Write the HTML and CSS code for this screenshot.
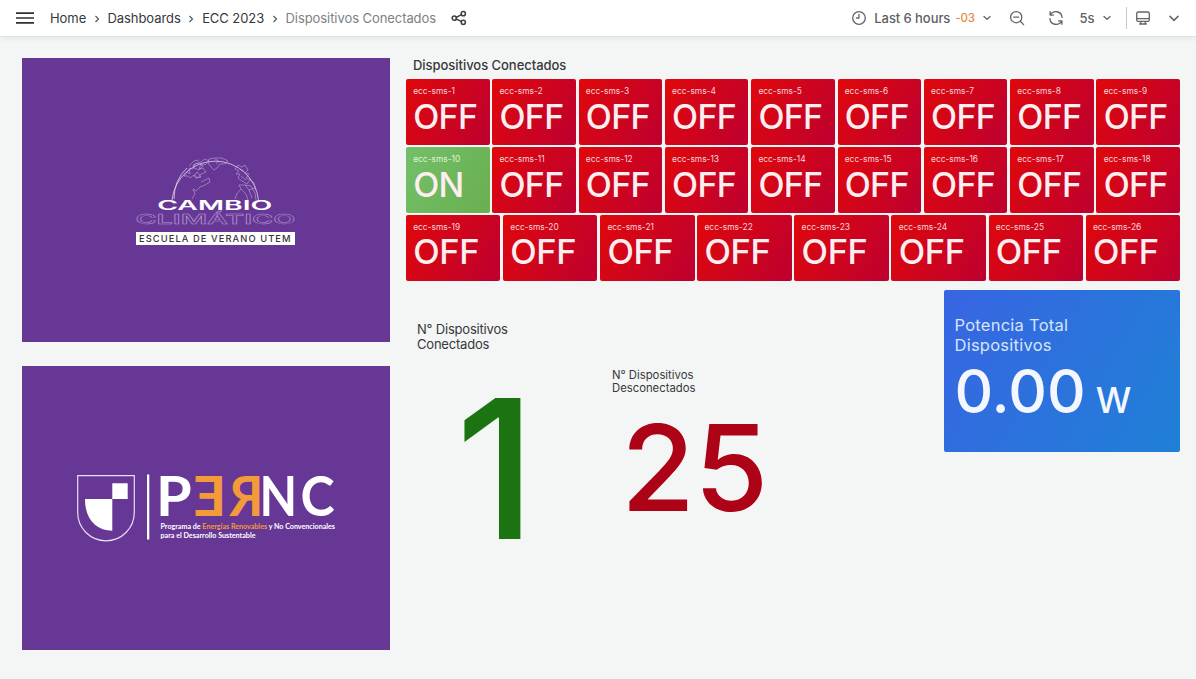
FILE: index.html
```html
<!DOCTYPE html>
<html lang="es">
<head>
<meta charset="utf-8">
<title>Dispositivos Conectados</title>
<link rel="stylesheet" href="styles.css">
</head>
<body>
<header class="topbar">
  <svg class="menu" viewBox="0 0 18 12" width="18" height="12"><path d="M0 1.1H18M0 6H18M0 10.9H18"/></svg>
  <nav class="crumbs">
    <a>Home</a>
    <svg class="sep" viewBox="0 0 6 8"><path d="M1.5 1L4.5 4L1.5 7"/></svg>
    <a>Dashboards</a>
    <svg class="sep" viewBox="0 0 6 8"><path d="M1.5 1L4.5 4L1.5 7"/></svg>
    <a>ECC 2023</a>
    <svg class="sep" viewBox="0 0 6 8"><path d="M1.5 1L4.5 4L1.5 7"/></svg>
    <span class="current">Dispositivos Conectados</span>
  </nav>
  <svg class="icon share" viewBox="0 0 16 16" width="16" height="16"><circle cx="3.3" cy="8.2" r="2.1"/><circle cx="12.3" cy="3.7" r="2.1"/><circle cx="12.3" cy="12.3" r="2.1"/><path d="M5.3 7.3L10.3 4.7M5.3 9.1L10.3 11.4"/></svg>
  <div class="tools">
    <svg class="icon" viewBox="0 0 16 16" width="16" height="16"><circle cx="8" cy="8" r="6.3"/><path d="M8 4.5V8H5.5"/></svg>
    <span class="range">Last 6 hours</span>
    <span class="zone">-03</span>
    <svg class="icon caret" viewBox="0 0 8 6" width="8" height="6"><path d="M1 1.5L4 4.3L7 1.5"/></svg>
    <svg class="icon zoom" viewBox="0 0 16 16" width="16" height="16"><circle cx="7.2" cy="7.2" r="5.6"/><path d="M11.3 11.3L14.6 14.6M4.7 7.2H9.7"/></svg>
    <svg class="icon sync" viewBox="0 0 16 16" width="16" height="16"><path d="M2.1 1.7V5.1H5.4M2.4 5A6.2 6.2 0 0 1 14.1 7.4M13.9 14.3V10.9H10.6M13.6 11A6.2 6.2 0 0 1 1.9 8.6"/></svg>
    <span class="every">5s</span>
    <svg class="icon caret" viewBox="0 0 8 6" width="8" height="6"><path d="M1 1.5L4 4.3L7 1.5"/></svg>
    <i class="rule"></i>
    <svg class="icon" viewBox="0 0 16 16" width="16" height="16"><rect x="1.7" y="2" width="12.6" height="9.4" rx="1.4"/><path d="M1.7 8.7H14.3M5.7 11.6V13.9H10.3V11.6M4.6 14H11.4"/></svg>
    <svg class="icon more" viewBox="0 0 10 7" width="10" height="7"><path d="M1 1.4L5 5.4L9 1.4"/></svg>
  </div>
</header>

<main class="board">
  <section class="logos">
    <svg class="logo" viewBox="22 58 368 284">
      <g class="globe">
        <path class="rim" d="M172 200A43.500 43.500 0 0 1 258.500 200M174 199Q174 180 187 168"/>
        <path d="M184 176L187 172L190 174L189 168L193 169L195 164L201 162L205 159L209 161L205 165L201 164L199 169L203 168L206 172L201 174L198 178L194 175L190 178L188 176ZM189 166L194 161L199 160M193 165L198 163L203 166L199 170L194 168Z"/>
        <path d="M201 182L205 180L209 178L210 182L205 185L200 187L196 191L193 189L195 194L192 199M194 176L197 172L201 177L196 178Z"/>
        <path d="M209 159L215 158L222 158L228 161L225 164L220 164L217 168L214 170L211 167L208 163ZM215 159L219 161L216 164"/>
        <path d="M235 169L238 165L242 167L245 165L248 170L245 173L249 174L246 178L250 180L247 184L242 181L238 178L240 174L236 174L239 171ZM240 169L244 171M241 176L246 180"/>
        <path d="M235 199Q236 193 241 189L239 185L245 185L251 186L255 193L256 200M241 189L246 194L248 200M245 185L249 190L252 198M249 178L254 183L256 190M249 190L255 188"/>
      </g>
      <text class="cambio" transform="translate(157.200 210) scale(1.75 1)" font-size="12.800" textLength="65.800" lengthAdjust="spacingAndGlyphs">CAMBIO</text>
      <text class="clima" transform="translate(135.500 224) scale(1.75 1)" font-size="13.500" textLength="91.200" lengthAdjust="spacingAndGlyphs">CLIMÁTICO</text>
      <rect x="136" y="232" width="159" height="13" fill="#fff"/>
      <text class="escuela" x="139" y="242" font-size="9.300" textLength="151.500">ESCUELA DE VERANO UTEM</text>
    </svg>
    <svg class="logo" viewBox="22 366 368 284">
      <path class="shield" d="M77.700 475.700H134.300V512.500A28.300 28.300 0 0 1 77.700 512.500Z"/>
      <path fill="#fff" d="M112.300 483.300H127.700V499H112.300V530.700C96 530.700 85 519 85 499H112.300Z"/>
      <rect x="147" y="474.500" width="2.300" height="65" fill="#fff"/>
      <g class="pernc">
        <text transform="translate(156 516) scale(1.040 1)">P</text>
        <text class="hot" transform="translate(226.500 516) scale(-1.040 1)">E</text>
        <text class="hot" transform="translate(263.500 516) scale(-.960 1)">R</text>
        <text transform="translate(259.500 516) scale(.880 1)">N</text>
        <text transform="translate(300.500 516) scale(.930 1)">C</text>
      </g>
      <text class="sub" x="160.500" y="529" textLength="174.500" lengthAdjust="spacingAndGlyphs">Programa de <tspan class="hot">Energías Renovables</tspan> y No Convencionales</text>
      <text class="sub" x="160.500" y="538" textLength="95" lengthAdjust="spacingAndGlyphs">para el Desarrollo Sustentable</text>
    </svg>
  </section>

  <section class="panels">
    <h2 class="title">Dispositivos Conectados</h2>
    <div class="rows">
      <div class="row">
        <div class="tile"><small>ecc-sms-1</small><b>OFF</b></div>
        <div class="tile"><small>ecc-sms-2</small><b>OFF</b></div>
        <div class="tile"><small>ecc-sms-3</small><b>OFF</b></div>
        <div class="tile"><small>ecc-sms-4</small><b>OFF</b></div>
        <div class="tile"><small>ecc-sms-5</small><b>OFF</b></div>
        <div class="tile"><small>ecc-sms-6</small><b>OFF</b></div>
        <div class="tile"><small>ecc-sms-7</small><b>OFF</b></div>
        <div class="tile"><small>ecc-sms-8</small><b>OFF</b></div>
        <div class="tile"><small>ecc-sms-9</small><b>OFF</b></div>
      </div>
      <div class="row">
        <div class="tile on"><small>ecc-sms-10</small><b>ON</b></div>
        <div class="tile"><small>ecc-sms-11</small><b>OFF</b></div>
        <div class="tile"><small>ecc-sms-12</small><b>OFF</b></div>
        <div class="tile"><small>ecc-sms-13</small><b>OFF</b></div>
        <div class="tile"><small>ecc-sms-14</small><b>OFF</b></div>
        <div class="tile"><small>ecc-sms-15</small><b>OFF</b></div>
        <div class="tile"><small>ecc-sms-16</small><b>OFF</b></div>
        <div class="tile"><small>ecc-sms-17</small><b>OFF</b></div>
        <div class="tile"><small>ecc-sms-18</small><b>OFF</b></div>
      </div>
      <div class="row wide">
        <div class="tile"><small>ecc-sms-19</small><b>OFF</b></div>
        <div class="tile"><small>ecc-sms-20</small><b>OFF</b></div>
        <div class="tile"><small>ecc-sms-21</small><b>OFF</b></div>
        <div class="tile"><small>ecc-sms-22</small><b>OFF</b></div>
        <div class="tile"><small>ecc-sms-23</small><b>OFF</b></div>
        <div class="tile"><small>ecc-sms-24</small><b>OFF</b></div>
        <div class="tile"><small>ecc-sms-25</small><b>OFF</b></div>
        <div class="tile"><small>ecc-sms-26</small><b>OFF</b></div>
      </div>
    </div>
    <div class="stats">
      <div class="stat up">
        <p>N° Dispositivos<br>Conectados</p>
        <strong>1</strong>
      </div>
      <div class="stat down">
        <p>N° Dispositivos<br>Desconectados</p>
        <strong>25</strong>
      </div>
      <div class="power">
        <p>Potencia Total<br>Dispositivos</p>
        <div class="value">0.00<span>W</span></div>
      </div>
    </div>
  </section>
</main>
</body>
</html>
```

FILE: styles.css
```css
* { box-sizing: border-box; }
body {
  margin: 0;
  height: 679px;
  overflow: hidden;
  background: #f4f5f5;
  color: #36383c;
  font-family: Inter, "Liberation Sans", sans-serif;
}
p, h2 { margin: 0; font-weight: 400; }

.topbar {
  display: flex;
  align-items: center;
  height: 37px;
  padding: 0 16px;
  background: #fff;
  border-bottom: 1px solid #dfe0e1;
  box-shadow: 0 2px 6px rgba(24, 26, 27, .06);
  font-size: 13px;
}
.menu { stroke: #2f3136; stroke-width: 1.7; }
.crumbs { display: flex; align-items: center; margin-left: 16px; white-space: nowrap; letter-spacing: -.07px; }
.sep { width: 6px; height: 8px; margin: 2px 7.700px 0; fill: none; stroke: #55575b; stroke-width: 1.2; }
.current { color: #7d7f83; }
.icon { fill: none; stroke: #63656a; stroke-width: 1.3; stroke-linecap: round; stroke-linejoin: round; flex: none; }
.share { margin-left: 14.500px; stroke: #3c3e42; stroke-width: 1.5; }
.tools { display: flex; align-items: center; margin-left: auto; color: #5e6065; font-weight: 500; white-space: nowrap; }
.range { margin-left: 7.500px; letter-spacing: -.07px; }
.zone { margin-left: 5px; color: #e58b45; font-size: 11.5px; letter-spacing: -.1px; }
.caret { margin-left: 8px; }
.zone + .caret { margin-left: 8px; }
.zoom { margin-left: 18.500px; }
.sync { margin-left: 23px; }
.every { margin-left: 15px; }
.rule { width: 1px; height: 22px; margin: 0 8px 0 15px; background: #c9cacc; }
.more { margin: 0 1.500px 0 18px; stroke-width: 1.5; }

.board { display: grid; grid-template-columns: 368px 774px; column-gap: 16px; padding: 21px 16px 0 22px; }
.logos { display: grid; grid-template-rows: 284px 284px; row-gap: 24px; }
.logo { display: block; width: 368px; height: 284px; background: #673796; }
.globe { fill: none; stroke: #cdbbdf; stroke-width: .5; }
.rim { stroke: #e0d5eb; stroke-width: .8; }
.cambio { fill: #fff; font-weight: 600; }
.clima { fill: none; stroke: #b497d0; stroke-width: .4; font-weight: 600; }
.escuela { fill: #37343c; font-weight: 500; }
.shield { fill: none; stroke: #e8def1; stroke-width: 1.2; }
.pernc { fill: #fff; font-family: Lato, sans-serif; font-weight: 700; font-size: 55.5px; }
.sub { fill: #fff; font-family: Lato, sans-serif; font-weight: 700; font-size: 7.5px; }
.hot { fill: #f39a3b; }

.title { height: 21px; padding-left: 7px; font-size: 13px; font-weight: 500; line-height: 14px; letter-spacing: -.04px; }
.rows { display: grid; grid-template-rows: repeat(3, 65.6px); row-gap: 2.600px; }
.row { display: grid; grid-template-columns: repeat(9, 1fr); column-gap: 2.800px; }
.wide { grid-template-columns: repeat(8, 1fr); }
.tile {
  display: flex;
  flex-direction: column;
  padding: 7px 0 0 7.200px;
  border-radius: 2px;
  background: linear-gradient(120deg, #e0080b, #bd0030);
  color: #fff;
}
.tile small { font-size: 8.400px; line-height: 11px; color: #f9d5d9; }
.tile b { font-size: 34px; line-height: 39px; font-weight: 500; color: #fdeef0; letter-spacing: -.7px; }
.wide b { font-size: 34.500px; line-height: 38px; letter-spacing: -.4px; }
.on { background: linear-gradient(120deg, #73bf69, #6aaf50); }
.on small { color: #e0f2de; }

.stats { display: grid; grid-template-columns: 195px 343px 236px; align-items: start; padding-top: 9px; }
.stat p { padding-left: 11px; }
.up { padding-top: 32.500px; }
.up p { font-size: 13px; line-height: 14.500px; letter-spacing: -.2px; }
.down { padding-top: 79.500px; }
.down p { font-size: 11.300px; line-height: 12.500px; }
.stat strong { display: block; font-weight: 500; }
.up strong { margin-top: 21px; padding-left: 49.500px; color: #1b7411; font-size: 194px; line-height: 194px; }
.down strong { margin-top: 12.500px; padding-left: 20px; color: #ad0317; font-size: 120px; line-height: 121px; letter-spacing: -.8px; }
.power {
  height: 162px;
  padding: 26px 0 0 10.500px;
  border-radius: 2px;
  background: linear-gradient(120deg, #3865e3, #1f80d6);
}
.power p { color: #d8e4f8; font-size: 16.500px; line-height: 19.600px; letter-spacing: .25px; }
.value { color: #f4f8fe; font-size: 60px; line-height: 72px; font-weight: 500; white-space: nowrap; }
.value span { margin-left: 10px; font-size: 35.500px; }
```
